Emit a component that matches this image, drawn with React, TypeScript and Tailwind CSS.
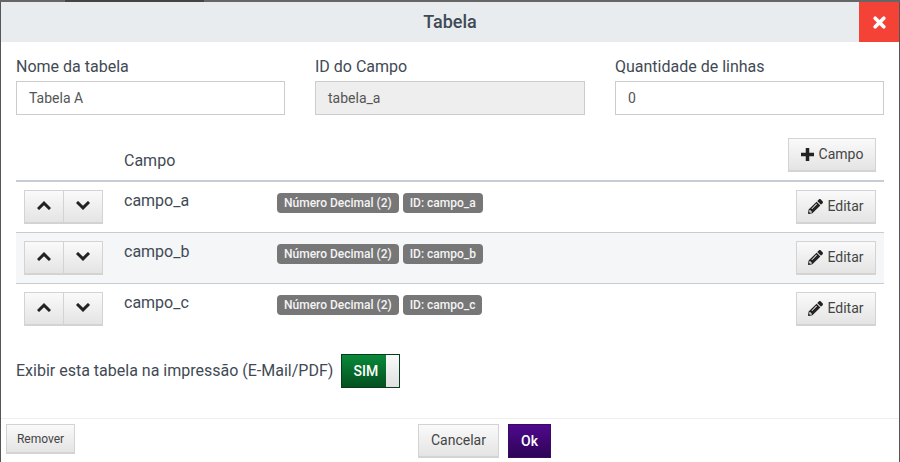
import React from 'react';
import { FaPencilAlt } from 'react-icons/fa';

const btn = 'border border-b-2 border-[#d3d3d3] bg-gradient-to-b from-[#fafafa] to-[#e4e4e4] text-[#444] flex items-center justify-center';

const Chevron = ({ up }: { up?: boolean }) => (
  <svg className="mb-[3px]" width="14" height="9" viewBox="0 0 14 9" fill="none" stroke="#222" strokeWidth="3">
    <path d={up ? 'M1 8 L7 2.2 L13 8' : 'M1 1 L7 6.8 L13 1'} />
  </svg>
);

const PlusIcon = () => (
  <svg width="13" height="13" viewBox="0 0 13 13" fill="#222">
    <rect x="4.75" y="0" width="3.5" height="13" />
    <rect x="0" y="4.75" width="13" height="3.5" />
  </svg>
);

const CloseIcon = () => (
  <svg width="13" height="13" viewBox="0 0 13 13" fill="none" stroke="#fff" strokeWidth="3.6" strokeLinecap="round">
    <path d="M2.2 2.2 L10.8 10.8 M10.8 2.2 L2.2 10.8" />
  </svg>
);

const Field = ({ label, value, disabled, width }: { label: string; value: string; disabled?: boolean; width: string }) => (
  <div className={width}>
    <div className="text-[16px] leading-[24px] text-[#3f4a55]">{label}</div>
    <div className={`mt-[2px] h-[34px] border border-[#ccc] px-[12px] flex items-center text-[14px] text-[#555] ${disabled ? 'bg-[#eee]' : 'bg-white'}`}>
      {value}
    </div>
  </div>
);

const Badge = ({ children }: { children: React.ReactNode }) => (
  <span className="h-[20px] px-[7px] rounded-[4px] bg-[#777] text-[#f4f4f4] text-[12px] font-medium flex items-center whitespace-nowrap">{children}</span>
);

const Row = ({ name, striped, last }: { name: string; striped?: boolean; last?: boolean }) => (
  <div className={`h-[51px] flex ${last ? '' : 'border-b border-[#c5ccd3]'} ${striped ? 'bg-[#f4f6f8]' : 'bg-white'}`}>
    <div className="ml-[8px] mt-[8px] flex h-[34px]">
      <button className={`${btn} w-[40px] h-[34px]`}><Chevron up /></button>
      <button className={`${btn} w-[40px] h-[34px] -ml-[1px]`}><Chevron /></button>
    </div>
    <div className="ml-[21px] mt-[7px] w-[153px] text-[16px] leading-[24px] text-[#3f4a55]">{name}</div>
    <div className="mt-[11px] flex gap-[4px] h-[20px]">
      <Badge>Número Decimal (2)</Badge>
      <Badge>ID: {name}</Badge>
    </div>
    <button className={`${btn} ml-auto mr-[8px] mt-[8px] w-[80px] h-[34px] gap-[4px] text-[14px]`}>
      <FaPencilAlt size={15} className="text-[#222]" />
      Editar
    </button>
  </div>
);

export default function App() {
  return (
    <div className="w-[900px] h-[462px] bg-[#555] overflow-hidden font-['Roboto',sans-serif]">
      <div className="h-[2px] flex">
        <div className="w-[65px] bg-[#666]" />
        <div className="w-[139px] bg-[#444]" />
        <div className="flex-1 bg-[#666]" />
      </div>
      <div className="mx-[1px] h-[460px] bg-white flex flex-col">
        <div className="h-[40px] bg-[#e9ecef] flex items-center relative">
          <div className="flex-1 pb-[1px] text-center text-[18px] font-medium text-[#3f4a55]">Tabela</div>
          <button className="absolute right-0 top-0 w-[40px] h-[40px] bg-[#f44336] flex items-center justify-center">
            <CloseIcon />
          </button>
        </div>

        <div className="px-[15px] flex-1 flex flex-col">
          <div className="mt-[13px] flex gap-[30px]">
            <Field width="w-[269px]" label="Nome da tabela" value="Tabela A" />
            <Field width="w-[270px]" label="ID do Campo" value="tabela_a" disabled />
            <Field width="w-[269px]" label="Quantidade de linhas" value="0" />
          </div>

          <div className="mt-[23px] h-[44px] flex border-b-2 border-[#c5ccd3]">
            <div className="ml-[108px] mt-[11px] text-[16px] leading-[24px] text-[#3f4a55]">Campo</div>
            <button className={`${btn} ml-auto mr-[8px] w-[88px] h-[34px] gap-[5px] text-[14px]`}>
              <PlusIcon />
              Campo
            </button>
          </div>

          <Row name="campo_a" />
          <Row name="campo_b" striped />
          <Row name="campo_c" last />

          <div className="mt-[19px] flex items-center gap-[8px]">
            <span className="text-[16px] text-[#3f4a55]">Exibir esta tabela na impressão (E-Mail/PDF)</span>
            <div className="w-[59px] h-[34px] border border-[#043d1c] flex">
              <div className="w-[44px] pl-[3px] bg-gradient-to-b from-[#0a8a3a] to-[#04501f] text-white text-[14px] font-medium flex items-center justify-center">SIM</div>
              <div className="flex-1 bg-gradient-to-b from-[#fafafa] to-[#e0e0e0]" />
            </div>
          </div>
        </div>

        <div className="h-[44px] border-t border-[#eee] flex items-start pl-[5px] pt-[5px]">
          <button className={`${btn} w-[69px] h-[30px] text-[12px]`}>Remover</button>
          <button className={`${btn} ml-[343px] w-[81px] h-[34px] text-[14px]`}>Cancelar</button>
          <button className="ml-[9px] w-[43px] h-[34px] bg-gradient-to-b from-[#4f0a8c] to-[#2f0458] border border-[#3a0a66] text-white text-[14px] font-medium">Ok</button>
        </div>
      </div>
    </div>
  );
}
